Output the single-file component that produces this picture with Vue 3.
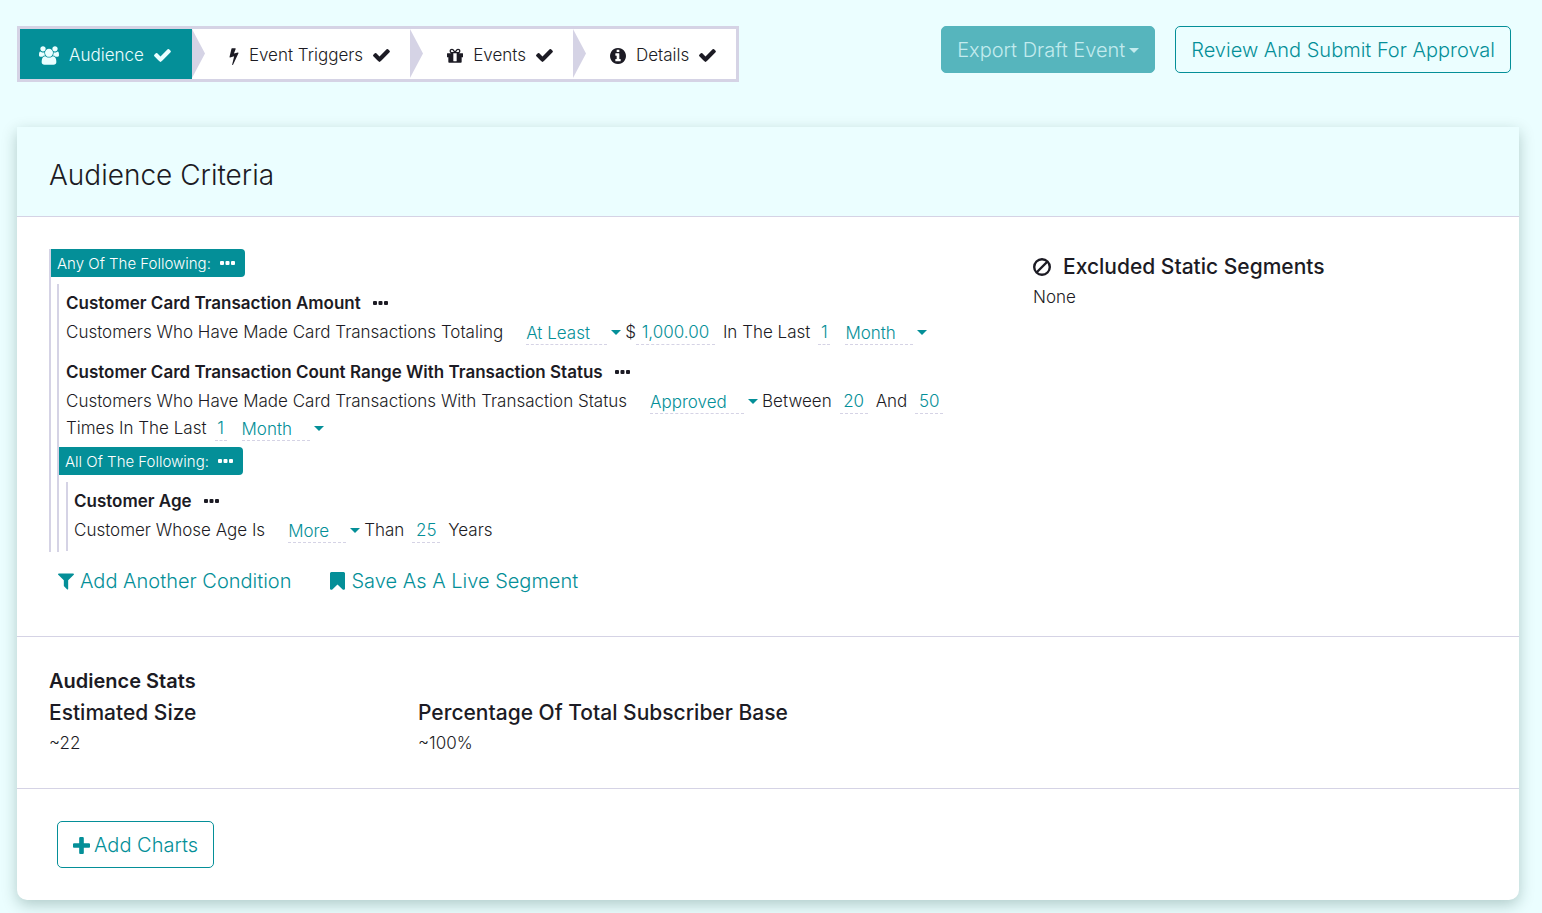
<script setup>
import { ref } from 'vue'

const CHECK = 'M1671 566q0 40-28 68l-724 724-136 136q-28 28-68 28t-68-28l-136-136-362-362q-28-28-28-68t28-68l136-136q28-28 68-28t68 28l294 295 656-657q28-28 68-28t68 28l136 136q28 28 28 68z'
const steps = [
  { label: 'Audience', kind: 'users', box: '0 0 1920 1792', path: 'M593 896q-162 5-265 128h-134q-82 0-138-40.5t-56-118.5q0-353 124-353 6 0 43.5 21t97.5 42.5 119 21.5q67 0 133-23-5 37-5 66 0 139 81 256zm1071 637q0 120-73 189.5t-194 69.5h-874q-121 0-194-69.5t-73-189.5q0-53 3.5-103.5t14-109 26.5-108.5 43-97.5 62-81 85.5-53.5 111.5-20q10 0 43 21.5t73 48 107 48 135 21.5 135-21.5 107-48 73-48 43-21.5q61 0 111.5 20t85.5 53.5 62 81 43 97.5 26.5 108.5 14 109 3.5 103.5zm-1024-1277q0 106-75 181t-181 75-181-75-75-181 75-181 181-75 181 75 75 181zm704 384q0 159-112.5 271.5t-271.5 112.5-271.5-112.5-112.5-271.5 112.5-271.5 271.5-112.5 271.5 112.5 112.5 271.5zm576 225q0 78-56 118.5t-138 40.5h-134q-103-123-265-128 81-117 81-256 0-29-5-66 66 23 133 23 59 0 119-21.5t97.5-42.5 43.5-21q124 0 124 353zm-128-609q0 106-75 181t-181 75-181-75-75-181 75-181 181-75 181 75 75 181z' },
  { label: 'Event Triggers', kind: 'bolt', box: '448 0 896 1792', path: 'M1333 566q18 20 7 44l-540 1157q-13 25-42 25-4 0-14-2-17-5-25.5-19t-4.5-30l197-808-406 101q-4 1-12 1-18 0-31-11-18-15-13-39l201-825q4-14 16-23t28-9h328q19 0 32 12.5t13 29.5q0 8-5 18l-171 463 396-98q8-2 12-2 19 0 34 15z' },
  { label: 'Events', kind: 'gift', box: '128 128 1536 1536', path: 'M1056 1356v-716h-320v716q0 25 18 38.5t46 13.5h192q28 0 46-13.5t18-38.5zm-456-844h195l-126-161q-26-31-69-31-40 0-68 28t-28 68 28 68 68 28zm688-96q0-40-28-68t-68-28q-43 0-69 31l-125 161h194q40 0 68-28t28-68zm376 256v320q0 14-9 23t-23 9h-96v416q0 40-28 68t-68 28h-1088q-40 0-68-28t-28-68v-416h-96q-14 0-23-9t-9-23v-320q0-14 9-23t23-9h440q-93 0-158.5-65.5t-65.5-158.5 65.5-158.5 158.5-65.5q107 0 168 77l128 165 128-165q61-77 168-77 93 0 158.5 65.5t65.5 158.5-65.5 158.5-158.5 65.5h440q14 0 23 9t9 23z' },
  { label: 'Details', kind: 'info', box: '128 128 1536 1536', path: 'M1152 1376v-160q0-14-9-23t-23-9h-96v-512q0-14-9-23t-23-9h-320q-14 0-23 9t-9 23v160q0 14 9 23t23 9h96v320h-96q-14 0-23 9t-9 23v160q0 14 9 23t23 9h448q14 0 23-9t9-23zm-128-896v-160q0-14-9-23t-23-9h-192q-14 0-23 9t-9 23v160q0 14 9 23t23 9h192q14 0 23-9t9-23zm640 416q0 209-103 385.5t-279.5 279.5-385.5 103-385.5-103-279.5-279.5-103-385.5 103-385.5 279.5-279.5 385.5-103 385.5 103 279.5 279.5 103 385.5z' },
]
const active = ref(0)

const txt = (text) => ({ type: 'text', text })
const pick = (label, value, size) => ({ type: 'pick', label, value, size })
const field = (label, value, size) => ({ type: 'field', label, value, size })

const rules = ref([
  {
    title: 'Customer Card Transaction Amount',
    parts: [
      txt('Customers Who Have Made Card Transactions Totaling'),
      pick('Comparison', 'At Least', 'm'),
      txt('$'),
      field('Amount', '1,000.00', 'amount'),
      txt('In The Last'),
      field('Number of periods', '1', 'one'),
      pick('Period', 'Month', 's'),
    ],
  },
  {
    title: 'Customer Card Transaction Count Range With Transaction Status',
    parts: [
      txt('Customers Who Have Made Card Transactions With Transaction Status'),
      pick('Transaction status', 'Approved', 'l'),
      txt('Between'),
      field('Minimum count', '20', 'two'),
      txt('And'),
      field('Maximum count', '50', 'two'),
      txt('Times In The Last'),
      field('Number of periods', '1', 'one'),
      pick('Period', 'Month', 's'),
    ],
  },
  {
    group: 'All Of The Following:',
    title: 'Customer Age',
    parts: [
      txt('Customer Whose Age Is'),
      pick('Comparison', 'More', 'xs'),
      txt('Than'),
      field('Age', '25', 'two'),
      txt('Years'),
    ],
  },
])
</script>

<template>
  <div class="page">
    <header class="top">
      <nav class="steps" aria-label="Event steps">
        <template v-for="(s, i) in steps" :key="s.label">
          <svg v-if="i" class="arrow" viewBox="0 0 13 50" aria-hidden="true"><path d="M0 0L13 24.500L0 49z" /></svg>
          <button type="button" class="step" :class="{ active: active === i, first: i === 0 }" @click="active = i">
            <svg class="icon" :class="s.kind" :viewBox="s.box" aria-hidden="true"><path :d="s.path" /></svg>
            <span>{{ s.label }}</span>
            <svg class="check" viewBox="120 330 1560 1200" aria-hidden="true"><path :d="CHECK" /></svg>
          </button>
        </template>
      </nav>
      <div class="actions">
        <button type="button" class="btn solid" disabled>
          Export Draft Event
          <svg class="caret" viewBox="0 0 10 5" aria-hidden="true"><path d="M0 0h10L5 5z" /></svg>
        </button>
        <button type="button" class="btn">Review And Submit For Approval</button>
      </div>
    </header>

    <main class="card">
      <div class="card-head"><h1>Audience Criteria</h1></div>

      <section class="criteria">
        <div class="conditions">
          <div class="group">
            <div class="badge">
              Any Of The Following:
              <button type="button" class="more" aria-label="Group options">
                <svg viewBox="0 0 15 4" aria-hidden="true"><rect width="4" height="4" rx="1" /><rect x="5.500" width="4" height="4" rx="1" /><rect x="11" width="4" height="4" rx="1" /></svg>
              </button>
            </div>
            <div class="nest">
              <template v-for="r in rules" :key="r.title">
                <div v-if="r.group" class="badge">
                  {{ r.group }}
                  <button type="button" class="more" aria-label="Group options">
                    <svg viewBox="0 0 15 4" aria-hidden="true"><rect width="4" height="4" rx="1" /><rect x="5.500" width="4" height="4" rx="1" /><rect x="11" width="4" height="4" rx="1" /></svg>
                  </button>
                </div>
                <div :class="{ nest: r.group }">
                  <div class="rule">
                    <h2>
                      {{ r.title }}
                      <button type="button" class="more" aria-label="Condition options">
                        <svg viewBox="0 0 15 4" aria-hidden="true"><rect width="4" height="4" rx="1" /><rect x="5.500" width="4" height="4" rx="1" /><rect x="11" width="4" height="4" rx="1" /></svg>
                      </button>
                    </h2>
                    <div class="sentence">
                      <template v-for="(p, i) in r.parts" :key="i">
                        <span v-if="p.type === 'text'" :class="{ money: p.text === '$' }">{{ p.text }}</span>
                        <input v-else-if="p.type === 'field'" v-model="p.value" type="text" :class="p.size" :aria-label="p.label">
                        <span v-else class="pick">
                          <select :class="p.size" :aria-label="p.label"><option>{{ p.value }}</option></select>
                          <svg class="caret" viewBox="0 0 10 5" aria-hidden="true"><path d="M0 0h10L5 5z" /></svg>
                        </span>
                      </template>
                    </div>
                  </div>
                </div>
              </template>
            </div>
          </div>
          <div class="links">
            <a href="#">
              <svg class="filter" viewBox="190 256 1412 1408" aria-hidden="true"><path d="M1595 295q17 41-14 70l-493 493v742q0 42-39 59-13 5-25 5-27 0-45-19l-256-256q-19-19-19-45v-486l-493-493q-31-29-14-70 17-39 59-39h1280q42 0 59 39z" /></svg>
              Add Another Condition
            </a>
            <a href="#">
              <svg class="mark" viewBox="256 128 1280 1516" aria-hidden="true"><path d="M1420 128q23 0 44 9 33 13 52.500 41t19.500 62v1289q0 34-19.500 62t-52.500 41q-19 8-44 8-48 0-83-32l-441-424-441 424q-36 33-83 33-23 0-44-9-33-13-52.500-41t-19.500-62v-1289q0-34 19.500-62t52.500-41q21-9 44-9h1048z" /></svg>
              Save As A Live Segment
            </a>
          </div>
        </div>
        <aside class="excluded">
          <h2>
            <svg viewBox="0 0 18 18" aria-hidden="true"><circle cx="9" cy="9" r="7.800" /><path d="M3.500 14.500l11-11" /></svg>
            Excluded Static Segments
          </h2>
          <p>None</p>
        </aside>
      </section>

      <section class="stats">
        <h2>Audience Stats</h2>
        <dl>
          <div><dt>Estimated Size</dt><dd>~22</dd></div>
          <div class="wide"><dt>Percentage Of Total Subscriber Base</dt><dd>~100%</dd></div>
        </dl>
      </section>

      <section class="charts">
        <button type="button" class="btn">
          <svg class="plus" viewBox="192 128 1408 1408" aria-hidden="true"><path d="M1600 736v192q0 40-28 68t-68 28h-416v416q0 40-28 68t-68 28h-192q-40 0-68-28t-28-68v-416h-416q-40 0-68-28t-28-68v-192q0-40 28-68t68-28h416v-416q0-40 28-68t68-28h192q40 0 68 28t28 68v416h416q40 0 68 28t28 68z" /></svg>
          Add Charts
        </button>
      </section>
    </main>
  </div>
</template>

<style>
body {
  background: #ebfeff;
}
</style>

<style scoped>
.page {
  --teal: #048f98;
  --line: #d5d3e5;
  --ink: #1c1b24;
  box-sizing: border-box;
  padding: 26px 23px 13px 17px;
  color: var(--ink);
  font: 300 17px/27px Inter, "Open Sans", sans-serif;
}
svg {
  display: block;
  flex: none;
  fill: currentColor;
}
button, input, select {
  font: inherit;
  color: inherit;
}
button {
  cursor: pointer;
}
h1, h2, p, dl, dd {
  margin: 0;
}

.top {
  display: flex;
  justify-content: space-between;
  align-items: flex-start;
  padding-right: 8px;
}
.steps {
  display: flex;
  border: 3px solid var(--line);
  background: #fff;
}
.step {
  display: flex;
  align-items: center;
  gap: 10px;
  height: 50px;
  padding: 3px 20px 0 24px;
  border: 0;
  background: none;
}
.step.first {
  padding-right: 21px;
  padding-left: 19px;
}
.step.active {
  background: var(--teal);
  color: #ebfeff;
}
.arrow {
  width: 13px;
  height: 50px;
  fill: var(--line);
}
.icon { width: 16px; height: 16px; }
.icon.users { width: 20px; height: 19px; }
.icon.bolt { width: 10px; height: 18px; }
.check { width: 17px; height: 13px; }

.actions {
  display: flex;
  gap: 20px;
}
.btn {
  display: flex;
  align-items: center;
  gap: 4px;
  height: 47px;
  padding: 1px 15px 0;
  border: 1px solid var(--teal);
  border-radius: 5px;
  background: none;
  color: var(--teal);
  font-size: 20px;
  white-space: nowrap;
}
.btn.solid {
  border-color: #56b5bd;
  background: #56b5bd;
  color: #c3ebee;
}
.caret {
  width: 10px;
  height: 5px;
}
.plus {
  width: 17px;
  height: 17px;
}

.card {
  margin-top: 45px;
  border-radius: 0 0 10px 10px;
  background: #fff;
  box-shadow: 0 5px 15px rgba(0, 50, 40, .25);
}
.card-head {
  padding: 30px 32px 23px;
  border-bottom: 1px solid var(--line);
  background: #ebfeff;
}
h1 {
  font-size: 28px;
  line-height: 36px;
  font-weight: 300;
}
.criteria {
  display: grid;
  grid-template-columns: repeat(3, 1fr);
  column-gap: 38px;
  padding: 32px 32px 40px;
}
.conditions {
  grid-column: span 2;
}
.group {
  border-left: 2px solid var(--line);
}
.badge {
  display: flex;
  align-items: center;
  justify-content: space-between;
  gap: 9px;
  width: max-content;
  height: 28px;
  padding: 0 10px 0 6px;
  border-radius: 0 4px 4px 0;
  background: var(--teal);
  color: #fff;
  font-size: 15px;
}
.more {
  padding: 0;
  border: 0;
  background: none;
}
.more svg {
  width: 15px;
  height: 4px;
}
.nest {
  margin: 7px 0 0 6px;
  padding-bottom: 1px;
  border-left: 2px solid var(--line);
}
.nest .nest {
  margin-left: 7px;
  padding-bottom: 2px;
}
.rule {
  padding: 4px 0 5px 7px;
}
.nest .nest .rule {
  padding-left: 6px;
}
div + div > .rule {
  margin-top: 2px;
}
.nest .badge + .nest .rule {
  margin-top: 0;
}
.rule h2 {
  display: flex;
  align-items: center;
  gap: 12px;
  height: 30px;
  font-size: 17px;
  font-weight: 600;
}
.sentence {
  display: flex;
  flex-wrap: wrap;
  align-items: center;
  column-gap: 8px;
  margin-top: 1px;
}
input, select {
  box-sizing: border-box;
  height: 25px;
  padding: 0;
  border: 0;
  border-bottom: 1px dashed var(--line);
  border-radius: 0;
  outline: 0;
  background: none;
  color: var(--teal);
  appearance: none;
}
input {
  text-align: center;
}
.pick {
  display: flex;
  align-items: center;
  gap: 4px;
  margin-left: 7px;
  margin-right: -4px;
  color: var(--teal);
}
span + .pick {
  margin-left: 15px;
}
.money {
  margin-right: -8px;
}
.m { width: 81px; }
.s { width: 68px; }
.l { width: 94px; }
.xs { width: 58px; }
.amount { width: 79px; }
.one { width: 12px; }
.two { width: 28px; }

.links {
  display: flex;
  gap: 39px;
  margin: 14px 0 0 9px;
}
.links a {
  display: flex;
  align-items: center;
  gap: 6px;
  height: 30px;
  color: var(--teal);
  font-size: 20px;
  text-decoration: none;
}
.filter { width: 16px; height: 17px; }
.mark { width: 15px; height: 18px; }

.excluded h2 {
  display: flex;
  align-items: center;
  gap: 12px;
  height: 35px;
  font-size: 21px;
  font-weight: 500;
}
.excluded svg {
  width: 18px;
  height: 18px;
  fill: none;
  stroke: currentColor;
  stroke-width: 2.4;
}

.stats {
  padding: 28px 32px 31px;
  border-top: 1px solid var(--line);
}
.stats h2 {
  font-size: 20px;
  line-height: 32px;
  font-weight: 600;
}
dl {
  display: grid;
  grid-template-columns: repeat(4, 1fr);
  column-gap: 38px;
}
.wide {
  grid-column: span 3;
}
dt {
  font-size: 21px;
  line-height: 32px;
  font-weight: 500;
}
dd {
  line-height: 28px;
}
.charts {
  padding: 32px 40px;
  border-top: 1px solid var(--line);
}
</style>
